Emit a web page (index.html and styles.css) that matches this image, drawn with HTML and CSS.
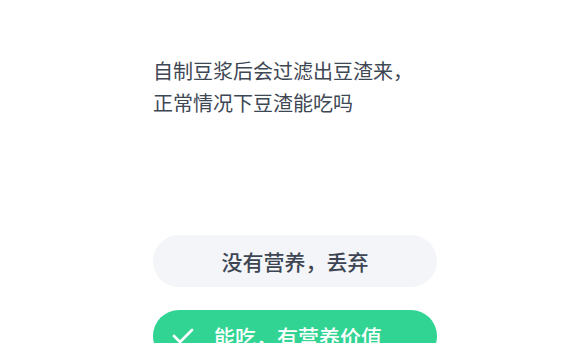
FILE: index.html
```html
<!doctype html>
<html lang="zh-CN">
<head>
    <meta charset="utf-8">
    <meta name="viewport" content="width=device-width, initial-scale=1">
    <title>豆渣问答</title>
    <link rel="stylesheet" href="styles.css">
</head>
<body>

    <div class="page">
        <div class="question">
            自制豆浆后会过滤出豆渣来，<br>
            正常情况下豆渣能吃吗
        </div>
        <div class="options">
            <div class="option">没有营养，丢弃</div>
            <div class="option option-right">
                <svg class="check" width="22" height="16" viewBox="0 0 22 16">
                    <path d="M2 8 L8 14 L20 2" fill="none" stroke="#fff" stroke-width="2.6" stroke-linecap="round" stroke-linejoin="round"/>
                </svg>
                <span>能吃，有营养价值</span>
            </div>
        </div>
    </div>

</body>
</html>
```

FILE: styles.css
```css
body {
    margin: 0;
    padding: 0;
    background: #fff;
    font-family: "Noto Sans CJK SC", "Noto Sans", sans-serif;
}

.page {
    height: 343px;
    overflow: hidden;
    padding: 55px 0 0 153px;
    box-sizing: border-box;
}

.question {
    font-size: 20px;
    line-height: 32px;
    color: #3e4754;
}

.options {
    margin-top: 116px;
    width: 284px;
}

.option {
    height: 52px;
    border-radius: 26px;
    background-color: #f3f5f8;
    color: #3d4553;
    font-size: 21px;
    font-weight: 500;
    display: flex;
    justify-content: center;
    align-items: center;
    margin-bottom: 23px;
}

.option-right {
    background-color: #31d493;
    color: #fff;
    justify-content: flex-start;
    padding-left: 19px;
}

.option-right .check {
    margin-right: 20px;
}
```
